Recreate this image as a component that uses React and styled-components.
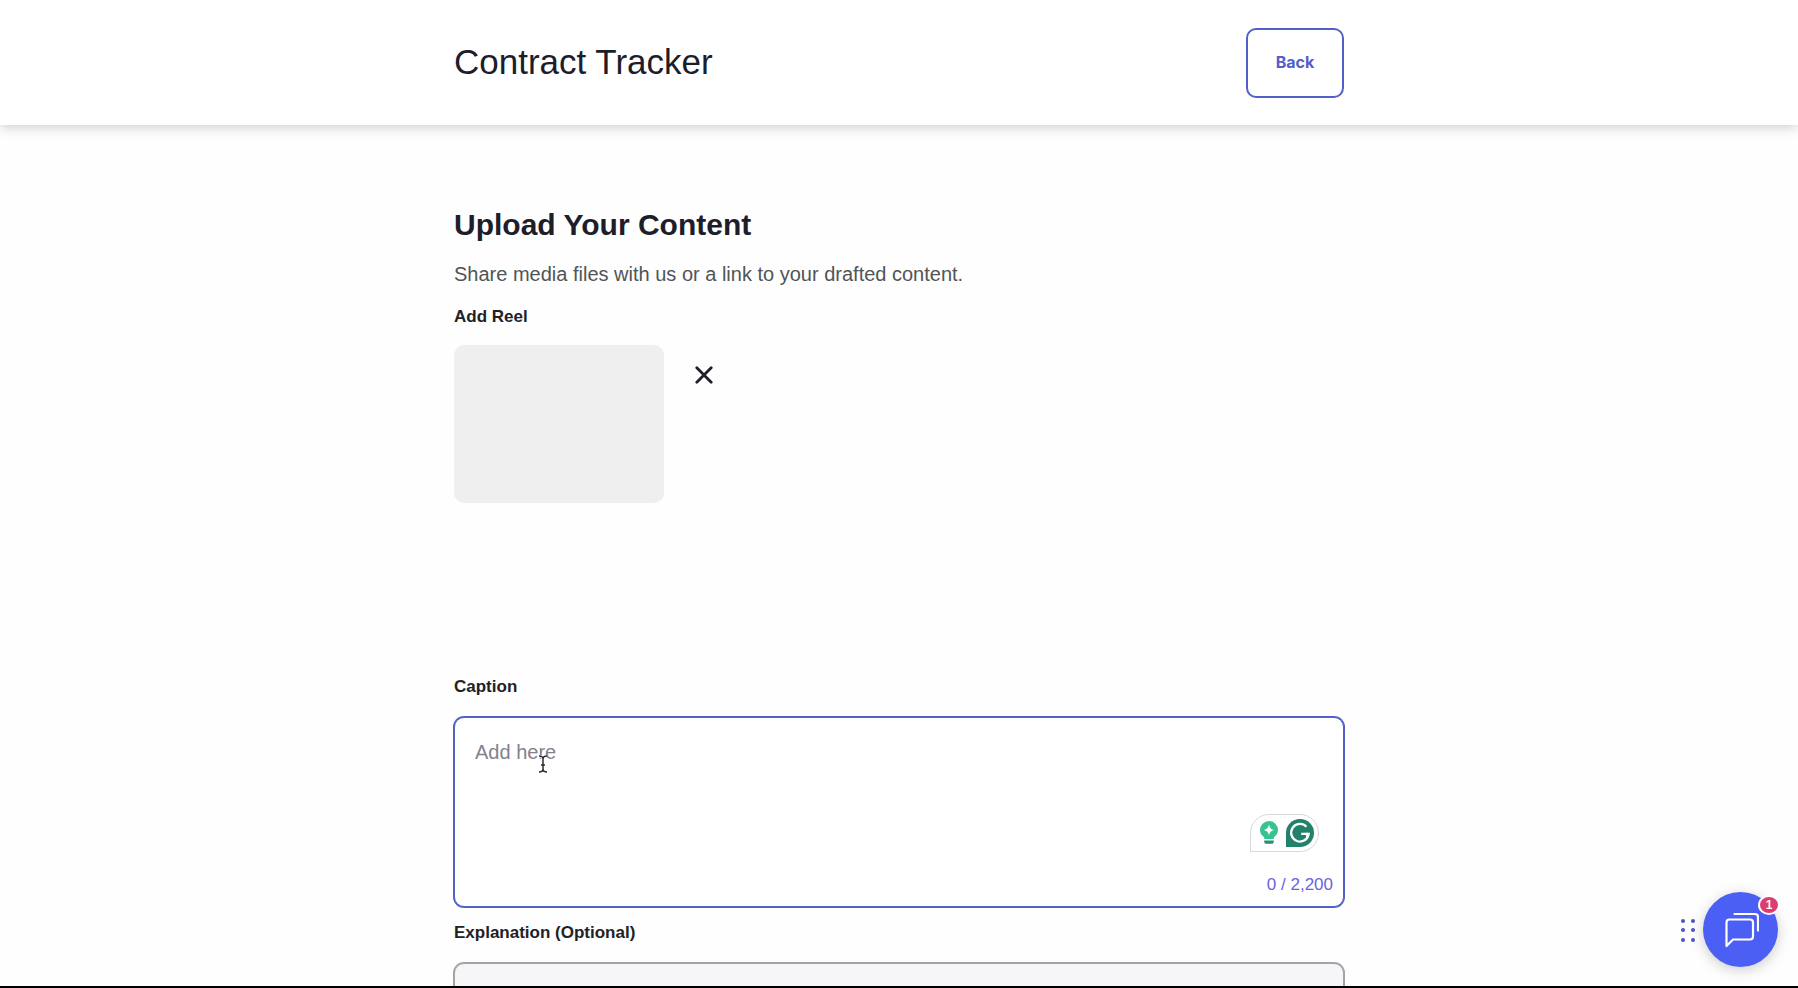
import { useState } from 'react';
import styled, { createGlobalStyle, css } from 'styled-components';

const colors = {
  ink: '#201d2b',
  muted: '#505557',
  label: '#222127',
  blue: '#5360c8',
  counter: '#6a63dc',
  chat: '#4c5ff5',
  grip: '#4a55c4',
  alert: '#de3d71',
  green: '#22816a',
  mint: '#35c48f',
};

const CAPTION_LIMIT = 2200;

const App = () => {
  const [caption, setCaption] = useState('');
  const [explanation, setExplanation] = useState('');
  const [hasReel, setHasReel] = useState(true);

  return (
    <Page>
      <GlobalStyle />
      <Header>
        <HeaderInner>
          <Title>Contract Tracker</Title>
          <BackButton type='button'>Back</BackButton>
        </HeaderInner>
      </Header>
      <Content>
        <Heading>Upload Your Content</Heading>
        <Intro>Share media files with us or a link to your drafted content.</Intro>
        <SectionLabel as='h3'>Add Reel</SectionLabel>
        <ReelRow>
          {hasReel && (
            <>
              <ReelPreview />
              <RemoveButton type='button' aria-label='Remove reel' onClick={() => setHasReel(false)}>
                <RemoveIcon />
              </RemoveButton>
            </>
          )}
        </ReelRow>
        <SectionLabel htmlFor='caption'>Caption</SectionLabel>
        <Field $active>
          <TextArea
            id='caption'
            placeholder='Add here'
            maxLength={CAPTION_LIMIT}
            spellCheck={false}
            value={caption}
            onChange={evt => setCaption(evt.target.value)}
          />
          <WritingTools>
            <BulbIcon />
            <WriterLogo />
          </WritingTools>
          <Counter>{caption.length} / {CAPTION_LIMIT.toLocaleString('en-US')}</Counter>
          <TextCursor />
        </Field>
        <SectionLabel htmlFor='explanation'>Explanation (Optional)</SectionLabel>
        <Field>
          <TextArea
            id='explanation'
            value={explanation}
            onChange={evt => setExplanation(evt.target.value)}
          />
        </Field>
      </Content>
      <ChatDock>
        <Grip />
        <ChatButton type='button' aria-label='Open chat'>
          <ChatIcon />
          <ChatCount>1</ChatCount>
        </ChatButton>
      </ChatDock>
    </Page>
  );
};

const RemoveIcon = () => (
  <svg width='18' height='18' viewBox='0 0 18 18' fill='none' stroke={colors.ink} strokeWidth='2.8' strokeLinecap='round'>
    <path d='M1.8 1.8 16.2 16.2M16.2 1.8 1.8 16.2' />
  </svg>
);

const BulbIcon = () => (
  <svg width='20' height='26' viewBox='0 0 20 26' fill={colors.mint}>
    <path d='M10 1a9 9 0 0 0-9 9c0 3.2 1.7 5.6 4.2 7.2V19h9.600v-1.800C17.3 15.6 19 13.2 19 10a9 9 0 0 0-9-9Z' />
    <path fill='#fff' d='M10 4.600c.7 3.3 2 4.600 5.200 5.400-3.200.8-4.500 2.100-5.200 5.400-.7-3.300-2-4.600-5.200-5.400 3.200-.8 4.500-2.100 5.200-5.400Z' />
    <path fill='#25907a' d='M5.200 20.600h9.600v.8c0 1.500-1 2.400-2.400 2.400H7.600c-1.400 0-2.400-.9-2.400-2.400Z' />
  </svg>
);

const WriterLogo = () => (
  <svg width='28' height='28' viewBox='0 0 28 28'>
    <path fill={colors.green} d='M14 0a14 14 0 1 1 0 28H0V14A14 14 0 0 1 14 0Z' />
    <path
      fill='none'
      stroke='#fff'
      strokeWidth='2.3'
      d='M20.400 7.700A8.800 8.800 0 1 0 22.700 14.800H15.200'
    />
    <path fill='none' stroke='#fff' strokeWidth='1.8' d='M21 13.800v5' />
  </svg>
);

const Grip = () => (
  <svg width='16' height='26' viewBox='0 0 16 26' fill={colors.grip}>
    {[2, 12].map(x => [4, 13, 23].map(y => (
      <circle key={`${x}-${y}`} cx={x} cy={y} r='2' />
    )))}
  </svg>
);

const ChatIcon = () => (
  <svg width='36' height='36' viewBox='0 0 36 36' fill='none' stroke='#fff' strokeWidth='2.2' strokeLinejoin='round' strokeLinecap='round'>
    <path d='M6.500 7.500H27a3 3 0 0 1 3 3V24.500a3 3 0 0 1-3 3H10L3.500 34V10.500a3 3 0 0 1 3-3Z' />
    <path d='M11.500 2H32a3 3 0 0 1 3 3V18.500' />
  </svg>
);

const TextCursor = () => (
  <CursorSvg width='10' height='18' viewBox='0 0 10 18' fill='none'>
    <path stroke='#fff' strokeWidth='3' d='M1 1c3 0 4 1 4 3 0-2 1-3 4-3M5 4v10M1 17c3 0 4-1 4-3 0 2 1 3 4 3' />
    <path stroke='#2c2c30' strokeWidth='1.5' d='M1 1c3 0 4 1 4 3 0-2 1-3 4-3M5 4v10M1 17c3 0 4-1 4-3 0 2 1 3 4 3M3 10h4' />
  </CursorSvg>
);

const GlobalStyle = createGlobalStyle`
  * {
    box-sizing: border-box;
  }

  body {
    margin: 0;
    background: #fefefe;
    font-family: "Liberation Sans", Arial, sans-serif;
    color: ${colors.ink};
  }
`;

const Page = styled.div`
  height: 100vh;
  overflow-y: auto;
  scrollbar-width: none;
  border-bottom: 2px solid #000;
`;

const Header = styled.header`
  background: #fff;
  padding: 28px 24px 27px;
  box-shadow: 0 2px 12px rgba(0, 0, 0, 0.2);
`;

const HeaderInner = styled.div`
  display: flex;
  align-items: center;
  justify-content: space-between;
  max-width: 890px;
  margin: 0 auto;
`;

const Title = styled.h1`
  margin: 0;
  padding-bottom: 2px;
  font-size: 35px;
  line-height: 40px;
  font-weight: 400;
`;

const BackButton = styled.button`
  width: 98px;
  height: 70px;
  padding: 0 0 2px;
  background: none;
  border: 2px solid ${colors.blue};
  border-radius: 10px;
  color: ${colors.blue};
  font-family: Inter, sans-serif;
  font-size: 16px;
  font-weight: 700;
  cursor: pointer;
`;

const Content = styled.main`
  max-width: 938px;
  margin: 0 auto;
  padding: 80px 24px 24px;
`;

const Heading = styled.h2`
  margin: 0 0 15px;
  font-size: 30px;
  line-height: 40px;
  font-weight: 700;
`;

const Intro = styled.p`
  margin: 0 0 17px;
  font-size: 20px;
  line-height: 28px;
  color: ${colors.muted};
`;

const SectionLabel = styled.label`
  display: block;
  margin: 0;
  font-size: 17px;
  line-height: 24px;
  font-weight: 700;
  color: ${colors.label};
`;

const ReelRow = styled.div`
  display: flex;
  align-items: flex-start;
  gap: 24px;
  min-height: 346px;
  padding-top: 16px;
`;

const ReelPreview = styled.div`
  width: 210px;
  height: 158px;
  border-radius: 10px;
  background: #efefef;
`;

const RemoveButton = styled.button`
  display: flex;
  align-items: center;
  justify-content: center;
  width: 32px;
  height: 60px;
  padding: 0;
  background: none;
  border: none;
  cursor: pointer;
`;

const Field = styled.div`
  position: relative;
  height: 190px;
  margin: 18px 0 14px;
  border: 1px solid #a3a3a8;
  border-radius: 10px;
  background: #f6f6f9;
  box-shadow: 0 0 0 1px #a3a3a8;

  ${({ $active }) => $active && css`
    border-color: ${colors.blue};
    background: #fff;
    box-shadow: 0 0 0 1px ${colors.blue};
  `}
`;

const TextArea = styled.textarea`
  display: block;
  width: 100%;
  height: 100%;
  padding: 20px;
  border: none;
  outline: none;
  resize: none;
  background: none;
  color: ${colors.ink};
  font-family: inherit;
  font-size: 20px;
  line-height: 28px;

  &::placeholder {
    color: #85808c;
    opacity: 1;
  }
`;

const WritingTools = styled.div`
  position: absolute;
  right: 24px;
  bottom: 54px;
  display: flex;
  align-items: center;
  gap: 7px;
  padding: 4px 4px 4px 8px;
  border: 1px solid #d9d7dc;
  border-radius: 19px 19px 19px 0;
  background: #fff;
`;

const Counter = styled.span`
  position: absolute;
  right: 10px;
  bottom: 9px;
  font-size: 17px;
  line-height: 24px;
  color: ${colors.counter};
`;

const CursorSvg = styled.svg`
  position: absolute;
  left: 83px;
  top: 37px;
  pointer-events: none;
`;

const ChatDock = styled.div`
  position: fixed;
  right: 20px;
  bottom: 21px;
  display: flex;
  align-items: center;
  gap: 6px;
`;

const ChatButton = styled.button`
  position: relative;
  display: flex;
  align-items: center;
  justify-content: center;
  width: 75px;
  height: 75px;
  padding: 0;
  border: none;
  border-radius: 50%;
  background: ${colors.chat};
  box-shadow: 0 3px 14px rgba(0, 0, 0, 0.2);
  cursor: pointer;
`;

const ChatCount = styled.span`
  position: absolute;
  top: 3px;
  right: -2px;
  width: 22px;
  height: 20px;
  border: 2px solid #fff;
  border-radius: 50%;
  background: ${colors.alert};
  color: #fff;
  font-family: "Liberation Sans", Arial, sans-serif;
  font-size: 12px;
  line-height: 16px;
  font-weight: 700;
  text-align: center;
`;

export default App;
